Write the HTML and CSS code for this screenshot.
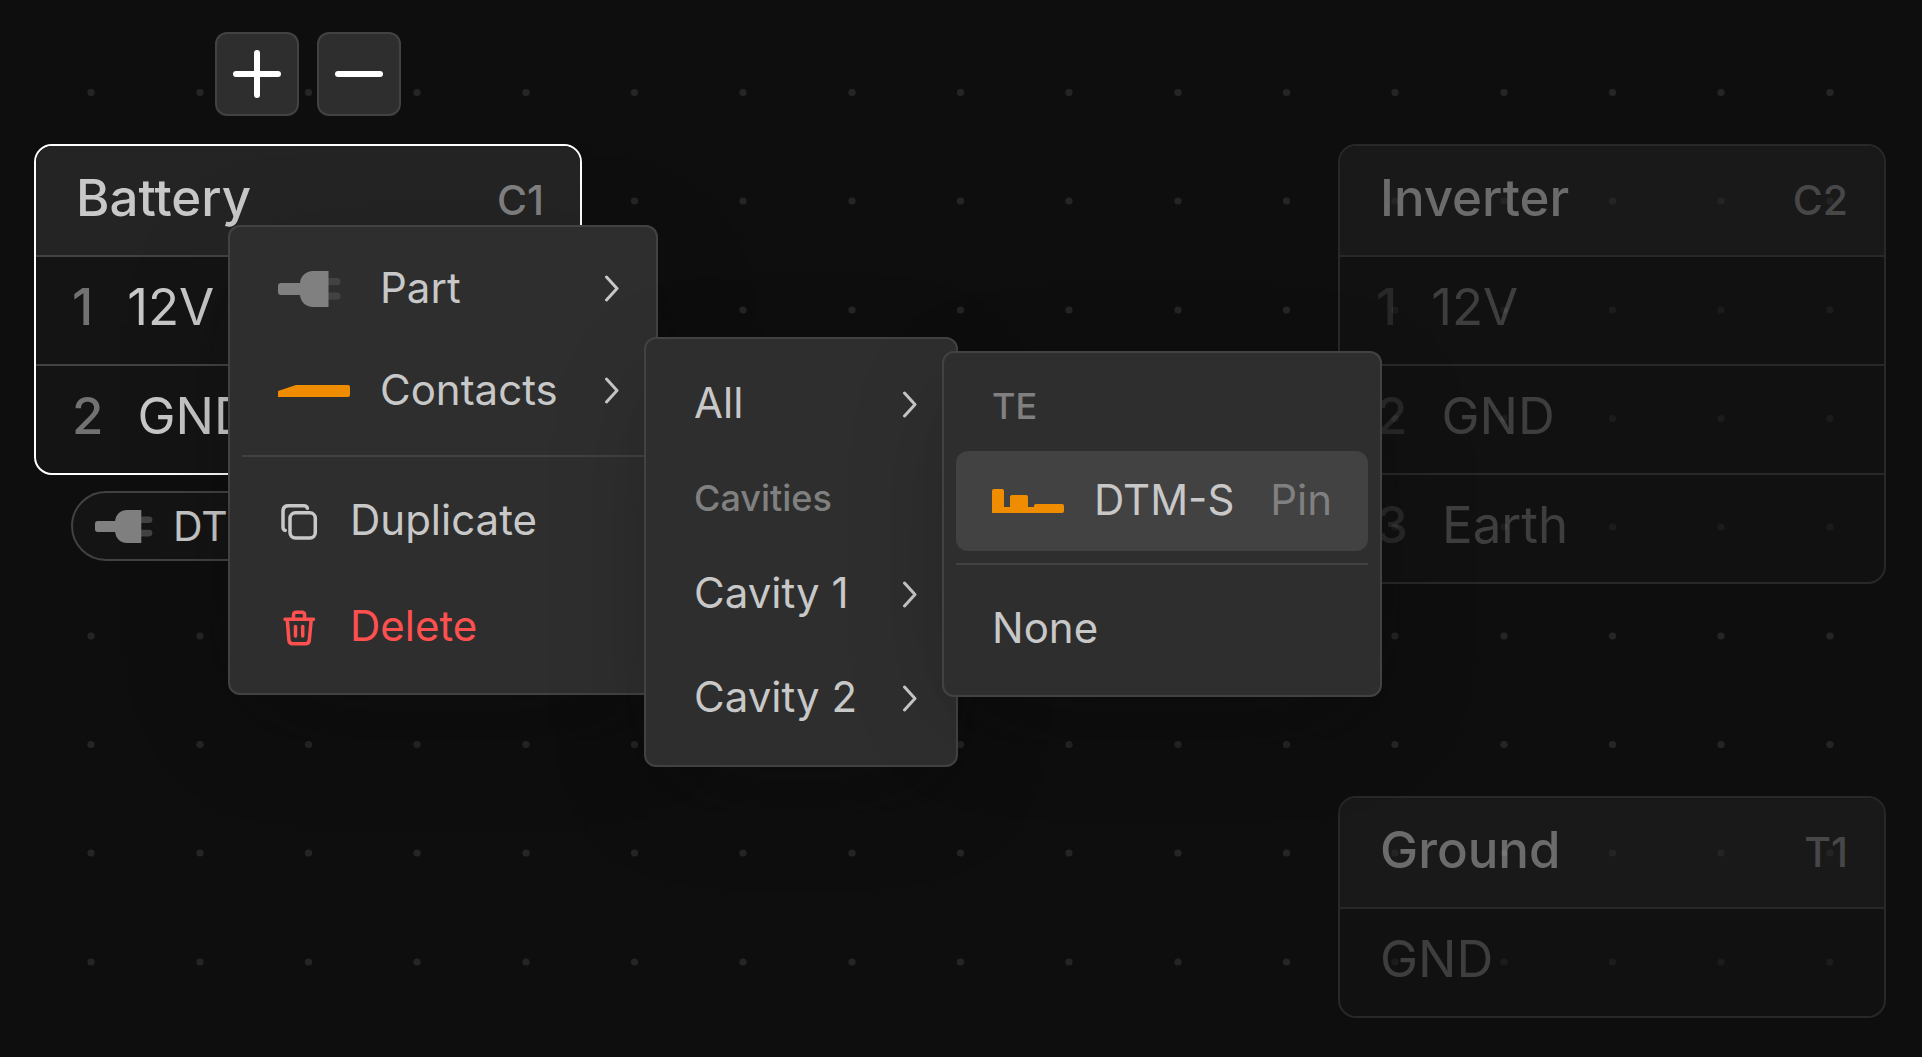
FILE: index.html
```html
<!DOCTYPE html>
<html lang="en">
<head>
<meta charset="utf-8">
<title>Harness editor</title>
<link rel="stylesheet" href="styles.css">
</head>
<body>
<svg class="sprite" aria-hidden="true">
  <symbol id="plug" viewBox="0 0 72 36">
    <path class="plug-prong" d="M50 7h9a3.600 3.600 0 0 1 0 7.200h-9zM50 21.600h9a3.600 3.600 0 0 1 0 7.200h-9z"/>
    <path class="plug-body" d="M3 12h19C22.500 5 28 0 35 0h15.500v36H35c-7 0-12.500-5-13-12H3a3 3 0 0 1-3-3v-6a3 3 0 0 1 3-3z"/>
  </symbol>
  <symbol id="chevron" viewBox="0 0 16 28">
    <path d="M2.500 2 13 13.500 2.500 25"/>
  </symbol>
</svg>

<main class="canvas">
  <svg class="grid" aria-hidden="true">
    <defs>
      <!-- three grid steps each way, so the tile repeats on a whole pixel -->
      <pattern id="dots" x="37" y="38" width="326" height="326" patternUnits="userSpaceOnUse">
        <g class="grid-dot">
          <circle cx="54" cy="54.500" r="3.600"/><circle cx="163" cy="54.500" r="3.600"/><circle cx="271.500" cy="54.500" r="3.600"/>
          <circle cx="54" cy="163" r="3.600"/><circle cx="163" cy="163" r="3.600"/><circle cx="271.500" cy="163" r="3.600"/>
          <circle cx="54" cy="272" r="3.600"/><circle cx="163" cy="272" r="3.600"/><circle cx="271.500" cy="272" r="3.600"/>
        </g>
      </pattern>
    </defs>
    <rect width="100%" height="100%" fill="url(#dots)"/>
  </svg>

  <section class="node node-battery">
    <div class="toolbar">
      <button class="tool" type="button" aria-label="Add cavity">
        <svg viewBox="0 0 48 48" aria-hidden="true"><path d="M3 24h42M24 3v42"/></svg>
      </button>
      <button class="tool" type="button" aria-label="Remove cavity">
        <svg viewBox="0 0 48 48" aria-hidden="true"><path d="M3 24h42"/></svg>
      </button>
    </div>
    <div class="card card-selected">
      <header class="card-header"><h2>Battery</h2><span class="ref">C1</span></header>
      <ul class="pins">
        <li class="pin"><span class="pin-number">1</span>12V</li>
        <li class="pin"><span class="pin-number">2</span>GND</li>
      </ul>
    </div>
    <div class="part-tag">
      <svg class="part-tag-icon" aria-hidden="true"><use href="#plug"/></svg>DTM
    </div>
  </section>

  <section class="node node-inverter">
    <div class="card card-dimmed">
      <header class="card-header"><h2>Inverter</h2><span class="ref">C2</span></header>
      <ul class="pins">
        <li class="pin"><span class="pin-number">1</span>12V</li>
        <li class="pin"><span class="pin-number">2</span>GND</li>
        <li class="pin"><span class="pin-number">3</span>Earth</li>
      </ul>
    </div>
  </section>

  <section class="node node-ground">
    <div class="card card-dimmed">
      <header class="card-header"><h2>Ground</h2><span class="ref">T1</span></header>
      <ul class="pins">
        <li class="pin pin-terminal">GND</li>
      </ul>
    </div>
  </section>

  <div class="menu menu-node" role="menu" aria-label="Connector">
    <button class="item item-art" type="button" role="menuitem">
      <svg class="art plug" aria-hidden="true"><use href="#plug"/></svg>
      <span class="item-label">Part</span>
      <svg class="chevron" aria-hidden="true"><use href="#chevron"/></svg>
    </button>
    <button class="item item-art" type="button" role="menuitem">
      <svg class="art contact" viewBox="0 0 72 36" aria-hidden="true"><path d="M0 18 18 12h52a2 2 0 0 1 2 2v8a2 2 0 0 1-2 2H0z"/></svg>
      <span class="item-label">Contacts</span>
      <svg class="chevron" aria-hidden="true"><use href="#chevron"/></svg>
    </button>
    <hr class="separator">
    <button class="item item-action" type="button" role="menuitem">
      <svg class="action-icon" viewBox="0 0 42 42" aria-hidden="true"><rect x="12" y="11.800" width="25.300" height="25.200" rx="5.500"/><path d="M29.400 7.200C28.900 5.600 27.600 4.800 26 4.800H10.500Q5 4.800 5 10.300V26C5 27.800 5.700 29 7.200 29.400"/></svg>
      <span class="item-label">Duplicate</span>
    </button>
    <button class="item item-action item-danger" type="button" role="menuitem">
      <svg class="action-icon" viewBox="0 0 42 42" aria-hidden="true"><path d="M7 12.200H35.500M15.500 12V8Q15.500 5.200 18.300 5.200H24Q26.600 5.200 26.600 8V12M9.300 13 10.900 33Q11.200 36.800 15 36.800H27.200Q31 36.800 31.300 33L33.200 13M17.500 19.500V29M24.700 19.500V29"/></svg>
      <span class="item-label">Delete</span>
    </button>
  </div>

  <div class="menu menu-contacts" role="menu" aria-label="Contacts">
    <button class="item" type="button" role="menuitem">
      <span class="item-label">All</span>
      <svg class="chevron" aria-hidden="true"><use href="#chevron"/></svg>
    </button>
    <div class="group-label">Cavities</div>
    <button class="item" type="button" role="menuitem">
      <span class="item-label">Cavity 1</span>
      <svg class="chevron" aria-hidden="true"><use href="#chevron"/></svg>
    </button>
    <button class="item" type="button" role="menuitem">
      <span class="item-label">Cavity 2</span>
      <svg class="chevron" aria-hidden="true"><use href="#chevron"/></svg>
    </button>
  </div>

  <div class="menu menu-series" role="menu" aria-label="Contact series">
    <div class="group-label">TE</div>
    <button class="item item-active" type="button" role="menuitem">
      <svg class="art contact" viewBox="0 0 72 36" aria-hidden="true"><path d="M0 8a2 2 0 0 1 2-2h8a2 2 0 0 1 2 2v16h6V14a2 2 0 0 1 2-2h14a2 2 0 0 1 2 2v10h6v-1a2 2 0 0 1 2-2h26a2 2 0 0 1 2 2v5a2 2 0 0 1-2 2H0z"/></svg>
      <span class="item-label">DTM-S</span>
      <span class="item-hint">Pin</span>
    </button>
    <hr class="separator">
    <button class="item item-action" type="button" role="menuitem">
      <span class="item-label">None</span>
    </button>
  </div>
</main>
</body>
</html>
```
FILE: styles.css
```css
:root {
  --canvas: #0e0e0e;
  --card: #141414;
  --card-header: #242424;
  --menu: #2e2e2e;
  --line: #424242;
  --text: #c8c8c8;
  --muted: #808080;
  --orange: #f08c00;
  --red: #ff5050;
}

* {
  box-sizing: border-box;
}

body {
  margin: 0;
  background: var(--canvas);
  color: var(--text);
  font-family: Inter, "Liberation Sans", sans-serif;
}

svg {
  display: block;
  flex: none;
}

.sprite {
  position: absolute;
  width: 0;
  height: 0;
}

.canvas {
  position: relative;
  min-height: 100vh;
  overflow: hidden;
}

.grid {
  position: absolute;
  inset: 0;
  width: 100%;
  height: 100%;
}

.grid-dot {
  fill: #252525;
}

/* Nodes */

.node {
  position: absolute;
  width: 548px;
}

.node-battery {
  left: 34px;
  top: 144px;
}

.node-inverter {
  left: 1338px;
  top: 144px;
}

.node-ground {
  left: 1338px;
  top: 796px;
}

.toolbar {
  position: absolute;
  bottom: 100%;
  left: 0;
  right: 0;
  display: flex;
  justify-content: center;
  gap: 18px;
  padding-bottom: 28px;
}

.tool {
  display: grid;
  place-items: center;
  width: 84px;
  height: 84px;
  padding: 0;
  border: 2px solid var(--line);
  border-radius: 12px;
  background: var(--menu);
}

.tool svg {
  width: 48px;
  height: 48px;
  fill: none;
  stroke: #fff;
  stroke-width: 6;
  stroke-linecap: round;
}

.card {
  border: 2px solid var(--line);
  border-radius: 18px;
  background: var(--card);
  overflow: hidden;
}

.card-selected {
  border-color: #fff;
}

.card-dimmed {
  opacity: 0.5;
}

.card-header {
  display: flex;
  align-items: center;
  justify-content: space-between;
  height: 111px;
  padding: 0 36px 6px 40px;
  border-bottom: 2px solid var(--line);
  background: var(--card-header);
}

.card-header h2 {
  margin: 0;
  font-size: 51px;
  font-weight: 500;
  line-height: 60px;
}

.ref {
  padding-top: 4px;
  color: var(--muted);
  font-size: 41px;
  font-weight: 500;
  line-height: 54px;
}

.pins {
  margin: 0;
  padding: 0;
  list-style: none;
}

.pin {
  display: flex;
  align-items: center;
  gap: 34px;
  height: 107px;
  padding: 0 36px 8px;
  font-size: 51px;
  line-height: 60px;
}

.pin + .pin {
  height: 109px;
  border-top: 2px solid var(--line);
}

.pin-terminal {
  padding-left: 40px;
}

.card-dimmed .pin {
  color: rgb(200 200 200 / 0.5);
}

.pin-number {
  color: #727272;
  font-weight: 500;
}

.card-dimmed .pin-number {
  color: rgb(114 114 114 / 0.5);
}

.part-tag {
  display: flex;
  align-items: center;
  gap: 12px;
  width: max-content;
  height: 70px;
  margin: 16px 0 0 37px;
  padding: 0 22px;
  border: 2px solid var(--line);
  border-radius: 36px;
  background: var(--card);
  font-size: 41px;
  line-height: 48px;
}

.part-tag-icon {
  width: 66px;
  height: 33px;
}

.plug-body {
  fill: var(--muted);
}

.plug-prong {
  fill: var(--line);
}

/* Menus */

.menu {
  position: absolute;
  padding: 12px;
  border: 2px solid var(--line);
  border-radius: 12px;
  background: var(--menu);
  box-shadow: 0 30px 114px -30px rgb(14 14 14 / 0.35), 0 30px 60px -45px rgb(0 0 0 / 0.2);
}

.menu-node {
  left: 228px;
  top: 225px;
  width: 430px;
}

.menu-contacts {
  left: 644px;
  top: 337px;
  width: 314px;
  padding: 14px 12px;
}

.menu-contacts .item {
  padding-right: 26px;
}

.menu-series {
  left: 942px;
  top: 351px;
  width: 440px;
}

.item {
  display: flex;
  align-items: center;
  gap: 30px;
  width: 100%;
  height: 104px;
  padding: 0 24px 0 36px;
  border: 0;
  border-radius: 12px;
  background: none;
  color: inherit;
  font: inherit;
  font-size: 42px;
  line-height: 54px;
  text-align: left;
  white-space: nowrap;
}

.item-art {
  height: 102px;
  padding-bottom: 2px;
}

.item-action {
  height: 106px;
}

.item-active {
  height: 100px;
  padding-right: 36px;
  background: var(--line);
}

.item-danger {
  color: var(--red);
}

.item-label,
.item-hint,
.group-label {
  padding-bottom: 4px;
}

.item-art .item-label,
.item-active .item-label,
.item-active .item-hint {
  padding-bottom: 2px;
}

.item-label {
  flex: 1;
}

.item-hint {
  color: var(--muted);
}

.art {
  width: 72px;
  height: 36px;
}

.contact {
  fill: var(--orange);
}

.action-icon {
  width: 42px;
  height: 42px;
  fill: none;
  stroke: currentColor;
  stroke-width: 3.5;
  stroke-linecap: round;
  stroke-linejoin: round;
}

.chevron {
  width: 16px;
  height: 28px;
  fill: none;
  stroke: currentColor;
  stroke-width: 3;
  stroke-linecap: round;
  stroke-linejoin: round;
}

.group-label {
  display: flex;
  align-items: center;
  height: 86px;
  padding-left: 36px;
  color: var(--muted);
  font-size: 36px;
  font-weight: 500;
  line-height: 48px;
}

.separator {
  height: 2px;
  margin: 12px 0;
  border: 0;
  background: var(--line);
}
```
